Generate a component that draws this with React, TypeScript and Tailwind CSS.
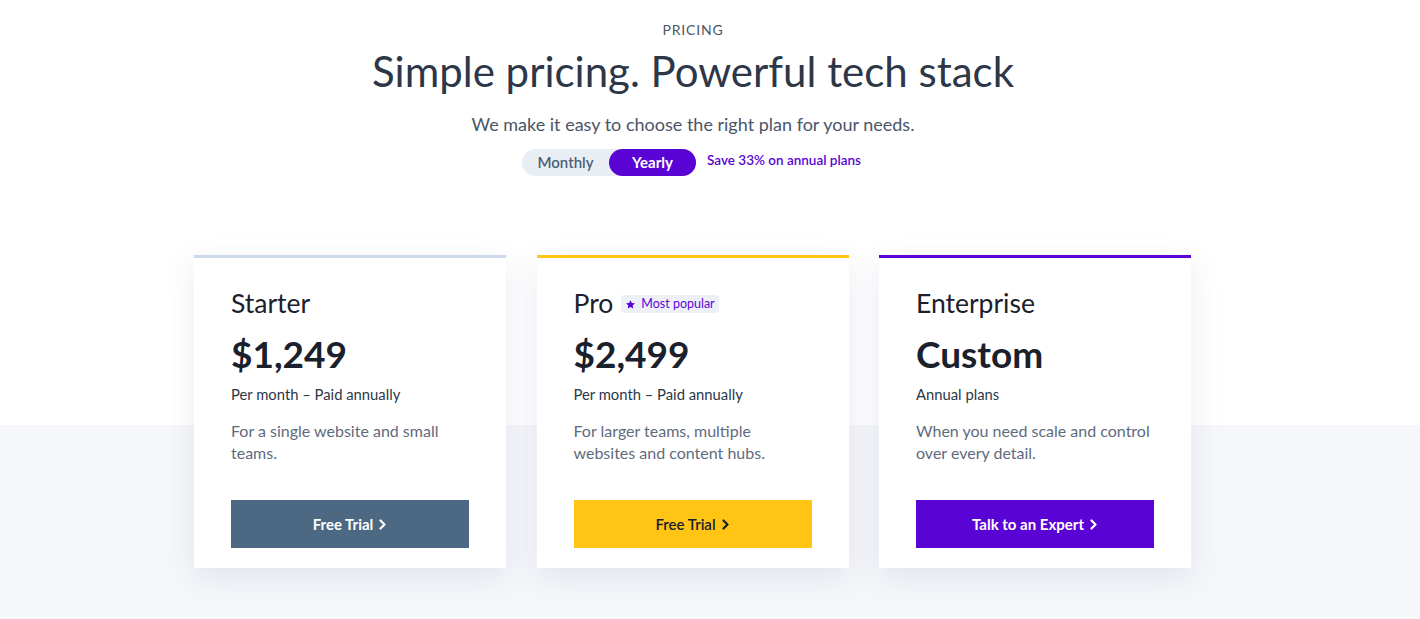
import React from "react";

const Chevron = () => (
  <svg width="9" height="11" viewBox="0 0 9 11" className="inline-block ml-[5px]">
    <path d="M2.5 1.5 L6.5 5.5 L2.5 9.5" fill="none" stroke="currentColor" strokeWidth="2.2" strokeLinecap="round" strokeLinejoin="round" />
  </svg>
);

type Plan = {
  name: string;
  price: string;
  sub: string;
  desc: string[];
  cta: string;
  bar: string;
  btn: string;
  badge?: boolean;
};

const plans: Plan[] = [
  {
    name: "Starter",
    price: "$1,249",
    sub: "Per month – Paid annually",
    desc: ["For a single website and small", "teams."],
    cta: "Free Trial",
    bar: "bg-[#cdd8eb]",
    btn: "bg-[#4d6882] text-white",
  },
  {
    name: "Pro",
    price: "$2,499",
    sub: "Per month – Paid annually",
    desc: ["For larger teams, multiple", "websites and content hubs."],
    cta: "Free Trial",
    bar: "bg-[#ffc414]",
    btn: "bg-[#ffc414] text-[#1a202c] font-semibold",
    badge: true,
  },
  {
    name: "Enterprise",
    price: "Custom",
    sub: "Annual plans",
    desc: ["When you need scale and control", "over every detail."],
    cta: "Talk to an Expert",
    bar: "bg-[#5a03d5]",
    btn: "bg-[#5a03d5] text-white",
  },
];

export default function App() {
  return (
    <div className="w-[1420px] h-[619px] overflow-hidden font-['Lato','Noto_Sans',sans-serif] bg-[linear-gradient(to_bottom,#ffffff_0px,#ffffff_425px,#f6f7fa_425px)]">
      <div className="flex flex-col items-center pt-[21px] pr-[34px]">
        <div className="text-[14px] leading-[18px] tracking-[0.06em] text-[#4a5568]">PRICING</div>
        <h1 className="mt-[8px] text-[42px] leading-[48px] text-[#2d3748] font-normal">Simple pricing. Powerful tech stack</h1>
        <p className="mt-[17px] text-[18px] leading-[24px] text-[#4a5568]">We make it easy to choose the right plan for your needs.</p>
        <div className="mt-[13px] flex items-center mr-[3px]">
          <div className="flex items-center h-[27px] rounded-full bg-[#e9eef5]">
            <div className="w-[87px] text-center text-[15px] font-semibold text-[#4a5f77]">Monthly</div>
            <div className="w-[87px] h-[27px] flex items-center justify-center rounded-full bg-[#5a03d5] text-white text-[15px] font-bold">Yearly</div>
          </div>
          <div className="ml-[11px] text-[13.5px] font-semibold text-[#5a03d5] -mt-[4px]">Save 33% on annual plans</div>
        </div>
      </div>

      <div className="flex gap-[30.5px] mt-[79px] pl-[194px]">
        {plans.map((p) => (
          <div key={p.name} className="w-[312px] h-[313px] bg-white shadow-[0_10px_30px_rgba(60,70,140,0.10)] flex flex-col">
            <div className={`h-[3px] ${p.bar}`} />
            <div className="px-[37px] pt-[29px] flex flex-col">
              <div className="flex items-center h-[32px]">
                <span className="text-[26.5px] leading-[32px] text-[#1a202c]">{p.name}</span>
                {p.badge && (
                  <span className="ml-[8px] mt-[2px] flex items-center h-[18px] px-[4px] rounded-[3px] bg-[#edf1f7] text-[12.5px] text-[#5a03d5]">
                    <svg width="11" height="11" viewBox="0 0 24 24" className="mr-[5px]">
                      <path d="M12 2.5l2.9 6.2 6.8.8-5 4.6 1.3 6.7L12 17.5l-6 3.3 1.3-6.7-5-4.6 6.8-.8z" fill="#5a03d5" />
                    </svg>
                    Most popular
                  </span>
                )}
              </div>
              <div className="mt-[14px] text-[37px] leading-[42px] font-bold text-[#1a202c]">{p.price}</div>
              <div className="mt-[8px] text-[14.8px] leading-[22px] text-[#2d3748]">{p.sub}</div>
              <div className="mt-[15px] text-[16px] leading-[22px] text-[#5f6b7d]">
                {p.desc.map((d) => (
                  <div key={d}>{d}</div>
                ))}
              </div>
              <button className={`mt-[36px] h-[48px] w-[238px] flex items-center justify-center text-[15px] font-bold ${p.btn}`}>
                {p.cta}
                <Chevron />
              </button>
            </div>
          </div>
        ))}
      </div>
    </div>
  );
}
